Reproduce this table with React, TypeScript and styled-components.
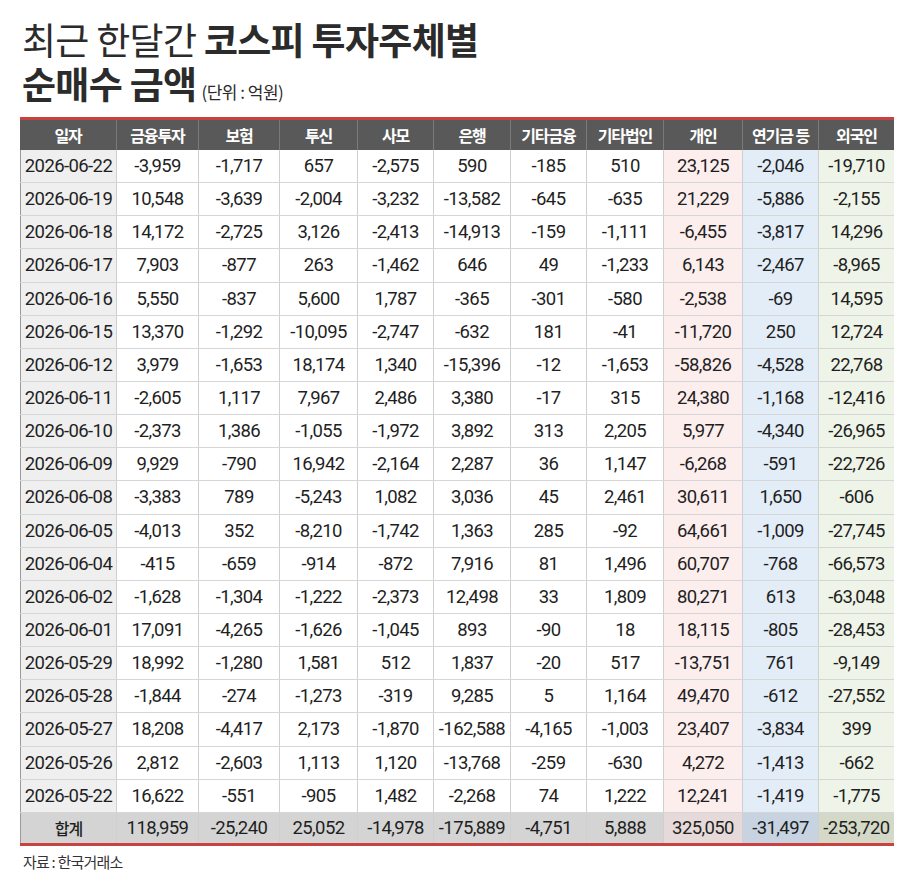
import React from "react";
import styled, { createGlobalStyle } from "styled-components";

const GlobalStyle = createGlobalStyle`
  html, body {
    margin: 0;
    padding: 0;
    background: #ffffff;
  }
  body {
    font-family: "Noto Sans CJK KR", "Noto Sans", sans-serif;
    color: #222222;
  }
`;

const Page = styled.div`
  width: 919px;
  padding: 17px 0 0 20px;
  box-sizing: border-box;
`;

const Title = styled.h1`
  display: flex;
  flex-direction: column;
  margin: 0 0 12px 2px;
  font-size: 37px;
  font-weight: 400;
  letter-spacing: -0.7px;
  color: #2b2b2b;

  b {
    font-weight: 700;
  }
`;

const TitleLine = styled.div`
  display: flex;
  align-items: baseline;
  height: 44px;
  line-height: 44px;
  white-space: pre;
`;

const Unit = styled.span`
  font-size: 17px;
  font-weight: 400;
  letter-spacing: -0.5px;
  margin-left: 5px;
`;

const Table = styled.div`
  width: 874px;
`;

const COLS = "96px 82px 81px 78px 76px 77px 76px 77px 79px 76px 76px";

const HeadRow = styled.div`
  display: grid;
  grid-template-columns: ${COLS};
  height: 33px;
  box-sizing: border-box;
  border-top: 3px solid #c9423f;
  background: #595959;
`;

const HeadCell = styled.div`
  display: flex;
  align-items: center;
  justify-content: center;
  color: #ffffff;
  font-size: 16px;
  font-weight: 700;
  letter-spacing: -1.1px;
  border-left: 1px solid #7a7a7a;

  &:first-child {
    border-left: none;
  }
`;

const Row = styled.div<{ $total?: boolean }>`
  display: grid;
  grid-template-columns: ${COLS};
  height: ${(p) => (p.$total ? "33px" : "33.15px")};
  box-sizing: border-box;
  border-bottom: ${(p) => (p.$total ? "3px solid #c9423f" : "1px solid #d6d6d6")};
`;

type Tone = "date" | "plain" | "pink" | "blue" | "green";

const fills: Record<Tone, [string, string]> = {
  date: ["#efefef", "#d4d4d4"],
  plain: ["#ffffff", "#d4d4d4"],
  pink: ["#fdeeee", "#e6d9d9"],
  blue: ["#e3edf8", "#c7d3e0"],
  green: ["#eef4e7", "#d3d9c6"],
};

const Cell = styled.div<{ $tone: Tone; $total?: boolean }>`
  display: flex;
  align-items: center;
  justify-content: center;
  background: ${(p) => fills[p.$tone][p.$total ? 1 : 0]};
  border-left: 1px solid #cfcfcf;
  font-family: Roboto, "Noto Sans CJK KR", sans-serif;
  font-size: 18.5px;
  letter-spacing: -0.6px;
  color: #1f1f1f;

  &:first-child {
    border-left: 1px solid #9a9a9a;
  }
`;

const TotalLabel = styled.span`
  font-family: "Noto Sans CJK KR", sans-serif;
  font-size: 16px;
  font-weight: 500;
  letter-spacing: -1px;
`;

const Source = styled.div`
  margin: 5px 0 0 3px;
  font-size: 15px;
  letter-spacing: -0.8px;
  color: #333333;
`;

const headers = [
  "일자",
  "금융투자",
  "보험",
  "투신",
  "사모",
  "은행",
  "기타금융",
  "기타법인",
  "개인",
  "연기금 등",
  "외국인",
];

const rows: string[][] = [
  ["2026-06-22", "-3,959", "-1,717", "657", "-2,575", "590", "-185", "510", "23,125", "-2,046", "-19,710"],
  ["2026-06-19", "10,548", "-3,639", "-2,004", "-3,232", "-13,582", "-645", "-635", "21,229", "-5,886", "-2,155"],
  ["2026-06-18", "14,172", "-2,725", "3,126", "-2,413", "-14,913", "-159", "-1,111", "-6,455", "-3,817", "14,296"],
  ["2026-06-17", "7,903", "-877", "263", "-1,462", "646", "49", "-1,233", "6,143", "-2,467", "-8,965"],
  ["2026-06-16", "5,550", "-837", "5,600", "1,787", "-365", "-301", "-580", "-2,538", "-69", "14,595"],
  ["2026-06-15", "13,370", "-1,292", "-10,095", "-2,747", "-632", "181", "-41", "-11,720", "250", "12,724"],
  ["2026-06-12", "3,979", "-1,653", "18,174", "1,340", "-15,396", "-12", "-1,653", "-58,826", "-4,528", "22,768"],
  ["2026-06-11", "-2,605", "1,117", "7,967", "2,486", "3,380", "-17", "315", "24,380", "-1,168", "-12,416"],
  ["2026-06-10", "-2,373", "1,386", "-1,055", "-1,972", "3,892", "313", "2,205", "5,977", "-4,340", "-26,965"],
  ["2026-06-09", "9,929", "-790", "16,942", "-2,164", "2,287", "36", "1,147", "-6,268", "-591", "-22,726"],
  ["2026-06-08", "-3,383", "789", "-5,243", "1,082", "3,036", "45", "2,461", "30,611", "1,650", "-606"],
  ["2026-06-05", "-4,013", "352", "-8,210", "-1,742", "1,363", "285", "-92", "64,661", "-1,009", "-27,745"],
  ["2026-06-04", "-415", "-659", "-914", "-872", "7,916", "81", "1,496", "60,707", "-768", "-66,573"],
  ["2026-06-02", "-1,628", "-1,304", "-1,222", "-2,373", "12,498", "33", "1,809", "80,271", "613", "-63,048"],
  ["2026-06-01", "17,091", "-4,265", "-1,626", "-1,045", "893", "-90", "18", "18,115", "-805", "-28,453"],
  ["2026-05-29", "18,992", "-1,280", "1,581", "512", "1,837", "-20", "517", "-13,751", "761", "-9,149"],
  ["2026-05-28", "-1,844", "-274", "-1,273", "-319", "9,285", "5", "1,164", "49,470", "-612", "-27,552"],
  ["2026-05-27", "18,208", "-4,417", "2,173", "-1,870", "-162,588", "-4,165", "-1,003", "23,407", "-3,834", "399"],
  ["2026-05-26", "2,812", "-2,603", "1,113", "1,120", "-13,768", "-259", "-630", "4,272", "-1,413", "-662"],
  ["2026-05-22", "16,622", "-551", "-905", "1,482", "-2,268", "74", "1,222", "12,241", "-1,419", "-1,775"],
];

const total = ["118,959", "-25,240", "25,052", "-14,978", "-175,889", "-4,751", "5,888", "325,050", "-31,497", "-253,720"];

const toneOf = (i: number): Tone => {
  if (i === 0) return "date";
  if (i === 8) return "pink";
  if (i === 9) return "blue";
  if (i === 10) return "green";
  return "plain";
};

export default function App() {
  return (
    <>
      <GlobalStyle />
      <Page>
        <Title>
          <TitleLine>
            최근 한달간 <b>코스피 투자주체별</b>
          </TitleLine>
          <TitleLine>
            <b>순매수 금액</b>
            <Unit>(단위 : 억원)</Unit>
          </TitleLine>
        </Title>
        <Table>
          <HeadRow>
            {headers.map((h) => (
              <HeadCell key={h}>{h}</HeadCell>
            ))}
          </HeadRow>
          {rows.map((r) => (
            <Row key={r[0]}>
              {r.map((v, i) => (
                <Cell key={i} $tone={toneOf(i)}>
                  {v}
                </Cell>
              ))}
            </Row>
          ))}
          <Row $total>
            <Cell $tone="date" $total>
              <TotalLabel>합계</TotalLabel>
            </Cell>
            {total.map((v, i) => (
              <Cell key={i} $tone={toneOf(i + 1)} $total>
                {v}
              </Cell>
            ))}
          </Row>
        </Table>
        <Source>자료 : 한국거래소</Source>
      </Page>
    </>
  );
}
